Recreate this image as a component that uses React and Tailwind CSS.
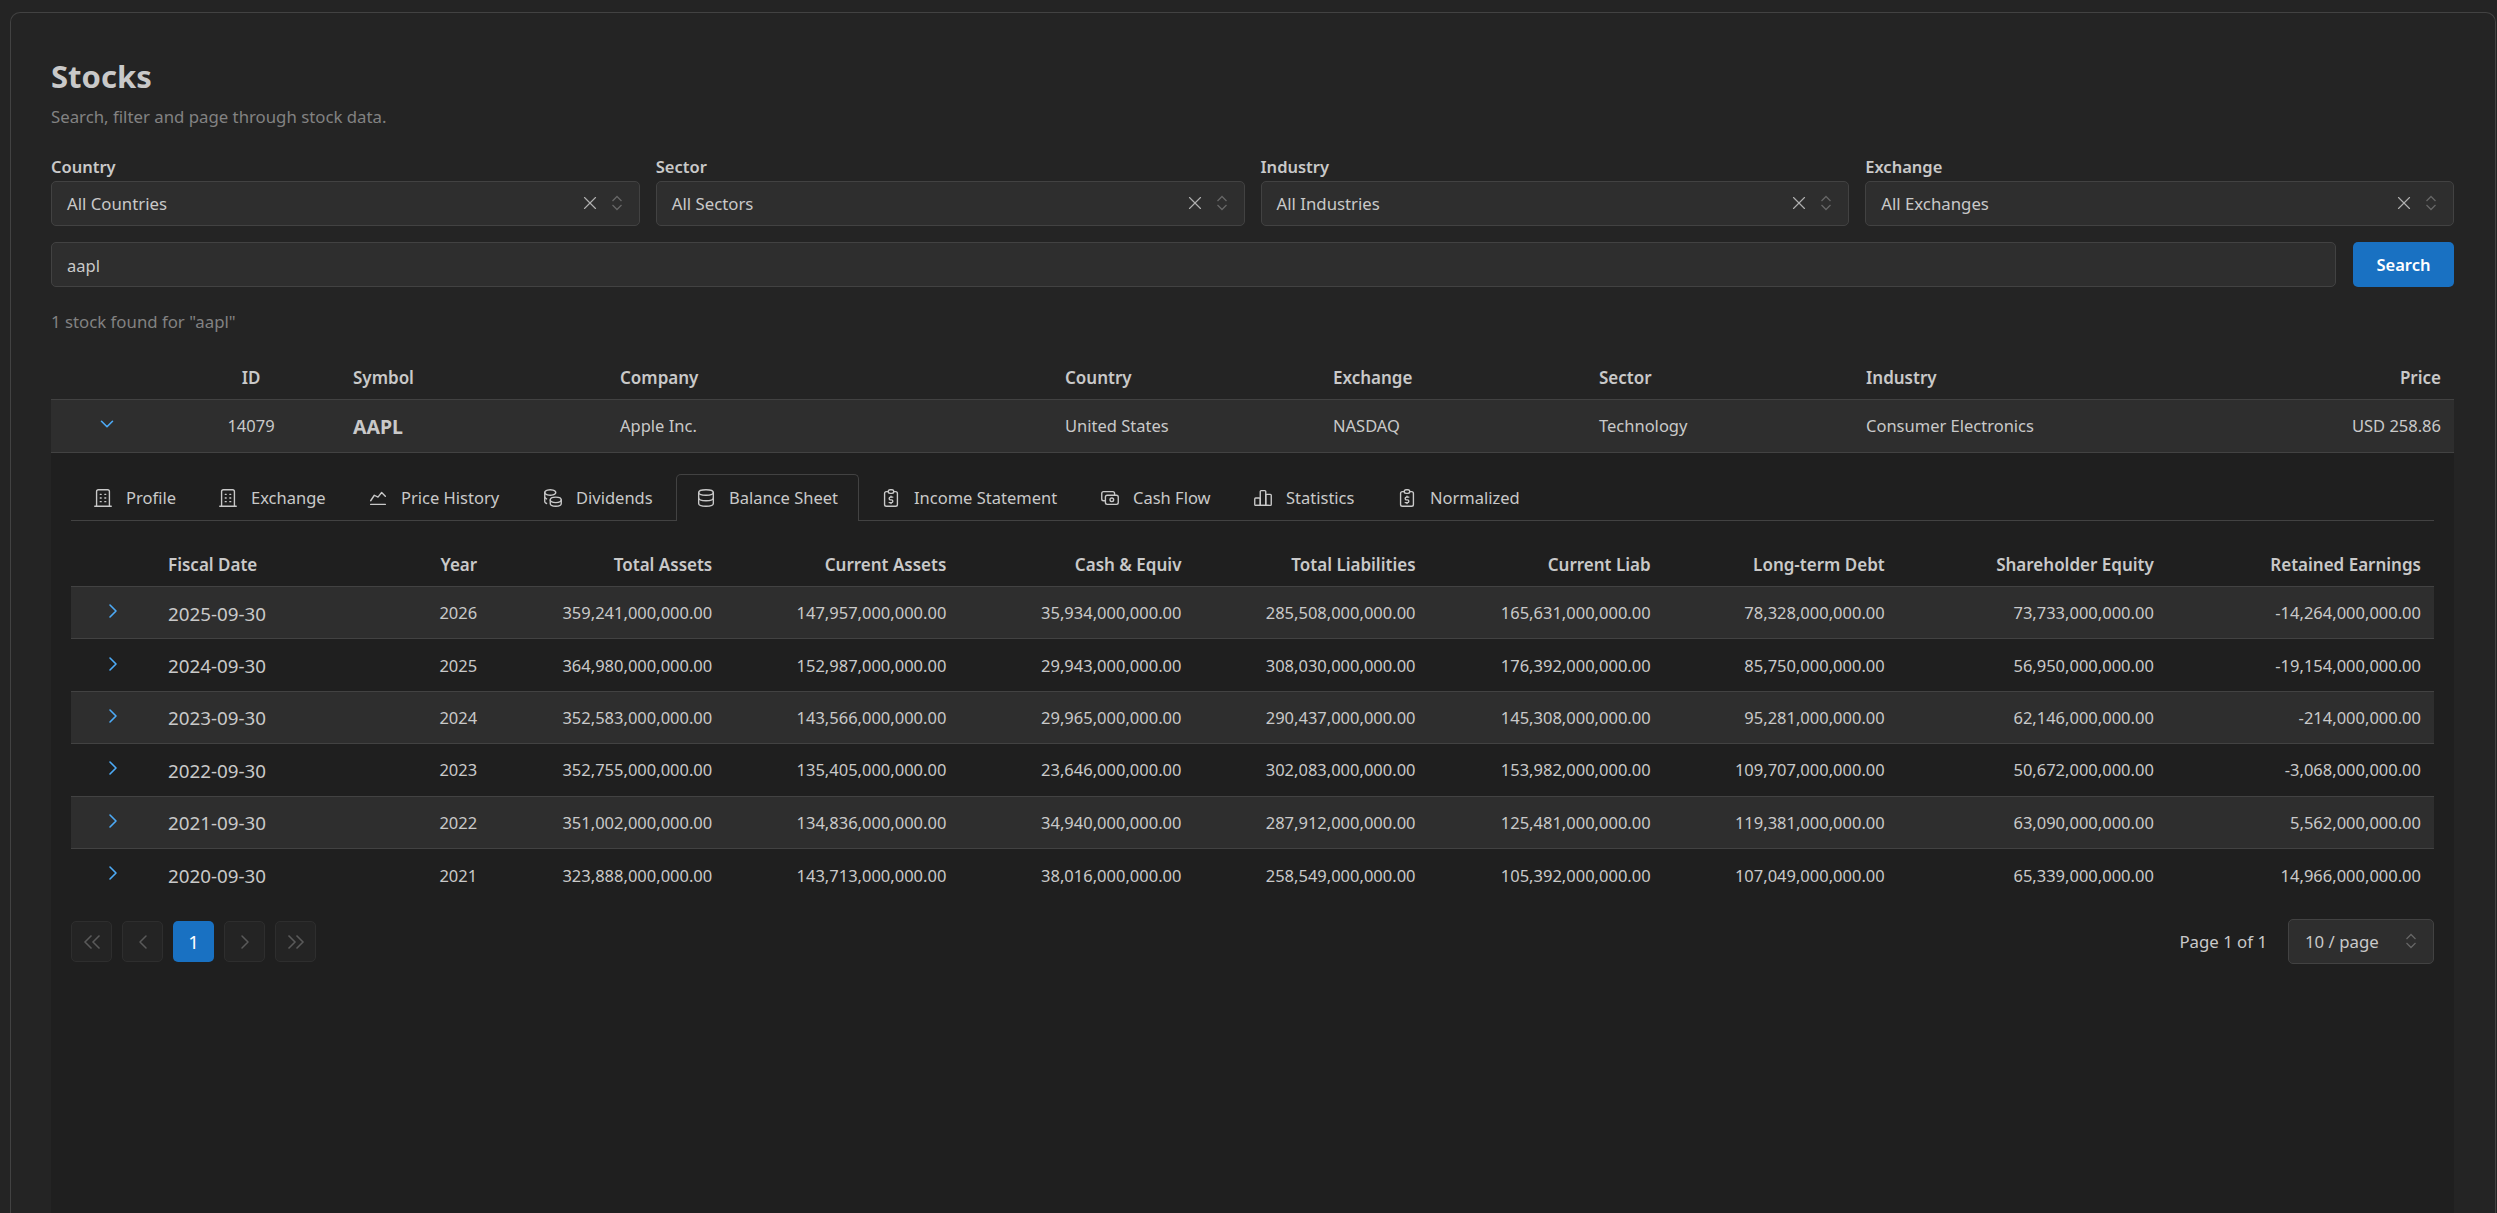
import { TbBuilding, TbChartLine, TbCoins, TbDatabase, TbReportMoney, TbCash, TbChartBar, TbChevronDown, TbChevronRight, TbChevronLeft, TbX } from "react-icons/tb";

const tabs = [
    { name: "Profile", icon: TbBuilding, w: "w-[125px]" },
    { name: "Exchange", icon: TbBuilding, w: "w-[150px]" },
    { name: "Price History", icon: TbChartLine, w: "w-[175px]" },
    { name: "Dividends", icon: TbCoins, w: "w-[155px]" },
    { name: "Balance Sheet", icon: TbDatabase, w: "w-[183px]", active: true },
    { name: "Income Statement", icon: TbReportMoney, w: "w-[219px]" },
    { name: "Cash Flow", icon: TbCash, w: "w-[153px]" },
    { name: "Statistics", icon: TbChartBar, w: "w-[144px]" },
    { name: "Normalized", icon: TbReportMoney, w: "w-[166px]" },
];

const rows = [
    ["2025-09-30", "2026", "359,241,000,000.00", "147,957,000,000.00", "35,934,000,000.00", "285,508,000,000.00", "165,631,000,000.00", "78,328,000,000.00", "73,733,000,000.00", "-14,264,000,000.00"],
    ["2024-09-30", "2025", "364,980,000,000.00", "152,987,000,000.00", "29,943,000,000.00", "308,030,000,000.00", "176,392,000,000.00", "85,750,000,000.00", "56,950,000,000.00", "-19,154,000,000.00"],
    ["2023-09-30", "2024", "352,583,000,000.00", "143,566,000,000.00", "29,965,000,000.00", "290,437,000,000.00", "145,308,000,000.00", "95,281,000,000.00", "62,146,000,000.00", "-214,000,000.00"],
    ["2022-09-30", "2023", "352,755,000,000.00", "135,405,000,000.00", "23,646,000,000.00", "302,083,000,000.00", "153,982,000,000.00", "109,707,000,000.00", "50,672,000,000.00", "-3,068,000,000.00"],
    ["2021-09-30", "2022", "351,002,000,000.00", "134,836,000,000.00", "34,940,000,000.00", "287,912,000,000.00", "125,481,000,000.00", "119,381,000,000.00", "63,090,000,000.00", "5,562,000,000.00"],
    ["2020-09-30", "2021", "323,888,000,000.00", "143,713,000,000.00", "38,016,000,000.00", "258,549,000,000.00", "105,392,000,000.00", "107,049,000,000.00", "65,339,000,000.00", "14,966,000,000.00"],
];

const heads = ["Total Assets", "Current Assets", "Cash & Equiv", "Total Liabilities", "Current Liab", "Long-term Debt", "Shareholder Equity", "Retained Earnings"];
const widths = ["w-[235px]", "w-[234px]", "w-[235px]", "w-[234px]", "w-[235px]", "w-[234px]", "w-[269px]", "w-[267px]"];

const Selector = () => (
    <svg className="w-[12px] h-[16px] shrink-0 text-[#666666]" viewBox="0 0 12 16" fill="none" stroke="currentColor" strokeWidth="1.3">
        <path d="M1.5 6L6 1.5L10.5 6" />
        <path d="M1.5 10L6 14.5L10.5 10" />
    </svg>
);

const Filter = ({ label, value }) => (
    <div>
        <div className="h-[28px] leading-[28px] font-semibold text-[#c9c9c9]">{label}</div>
        <div className="h-[45px] flex items-center pl-[15px] pr-[16px] rounded-[5px] bg-[#2e2e2e] border border-[#424242] text-[#c9c9c9]">
            <span className="flex-1 text-[16.8px] pt-[1px]">{value}</span>
            <TbX className="w-[22px] h-[22px] -mt-[2px] text-[#b0b0b0]" strokeWidth={1.25} />
            <div className="ml-[10px] -mt-[2px]"><Selector /></div>
        </div>
    </div>
);

const PageButton = ({ children }) => (
    <button className="w-[41px] h-[41px] flex items-center justify-center rounded-[5px] bg-[#242424] border border-[#2e2e2e] text-[#5a5a5a]">{children}</button>
);

const DoubleLeft = () => (
    <svg className="w-[18px] h-[16px]" viewBox="0 0 18 16" fill="none" stroke="currentColor" strokeWidth="1.5">
        <path d="M8.5 1.5L2 8L8.5 14.5" />
        <path d="M16.5 1.5L10 8L16.5 14.5" />
    </svg>
);

const DoubleRight = () => (
    <svg className="w-[18px] h-[16px]" viewBox="0 0 18 16" fill="none" stroke="currentColor" strokeWidth="1.5">
        <path d="M1.5 1.5L8 8L1.5 14.5" />
        <path d="M9.5 1.5L16 8L9.5 14.5" />
    </svg>
);

const App = () => {
    return (
        <div className="h-[1213px] overflow-hidden bg-[#242424] pt-3 pl-[10px] pr-[1px] text-[16.5px] text-[#c9c9c9] font-['Noto_Sans',sans-serif]">
            <div className="h-full pt-[39px] pl-[40px] pr-[41px] rounded-t-[10px] border-l border-r border-t border-[#424242]">
                <h2 className="h-[48px] text-[31px] leading-[48px] font-bold">Stocks</h2>
                <p className="mt-[5px] h-[24px] leading-[24px] text-[16.8px] text-[#828282]">Search, filter and page through stock data.</p>
                <div className="mt-[24px] grid grid-cols-4 gap-x-4">
                    <Filter label="Country" value="All Countries" />
                    <Filter label="Sector" value="All Sectors" />
                    <Filter label="Industry" value="All Industries" />
                    <Filter label="Exchange" value="All Exchanges" />
                </div>
                <div className="mt-4 flex gap-[17px]">
                    <div className="flex-1 h-[45px] flex items-center pt-[3px] px-[15px] rounded-[5px] bg-[#2e2e2e] border border-[#424242]">aapl</div>
                    <button className="w-[101px] h-[45px] pt-[2px] rounded-[5px] bg-[#1971c2] text-white font-semibold">Search</button>
                </div>
                <p className="mt-[23px] h-[24px] leading-[24px] text-[16.8px] text-[#828282]">1 stock found for "aapl"</p>

                <table className="mt-[21px] w-full table-fixed border-collapse">
                    <thead>
                        <tr className="h-[44px] border-b border-[#424242] text-[17px] [&>th]:pt-[2px]">
                            <th className="w-[111px]"></th>
                            <th className="w-[178px] font-semibold text-center">ID</th>
                            <th className="w-[267px] font-semibold text-left pl-[13px]">Symbol</th>
                            <th className="w-[445px] font-semibold text-left pl-[13px]">Company</th>
                            <th className="w-[268px] font-semibold text-left pl-[13px]">Country</th>
                            <th className="w-[266px] font-semibold text-left pl-[13px]">Exchange</th>
                            <th className="w-[267px] font-semibold text-left pl-[13px]">Sector</th>
                            <th className="w-[267px] font-semibold text-left pl-[13px]">Industry</th>
                            <th className="font-semibold text-right pr-[13px]">Price</th>
                        </tr>
                    </thead>
                    <tbody>
                        <tr className="h-[53px] bg-[#2e2e2e] border-b border-[#424242] [&>td]:pt-[2px]">
                            <td><TbChevronDown className="mx-auto -mt-[5px] w-[22px] h-[22px] text-[#4dabf7]" strokeWidth={1.75} /></td>
                            <td className="text-center">14079</td>
                            <td className="pl-[13px] text-[19.5px] font-bold">AAPL</td>
                            <td className="pl-[13px]">Apple Inc.</td>
                            <td className="pl-[13px]">United States</td>
                            <td className="pl-[13px]">NASDAQ</td>
                            <td className="pl-[13px]">Technology</td>
                            <td className="pl-[13px]">Consumer Electronics</td>
                            <td className="pr-[13px] text-right">USD 258.86</td>
                        </tr>
                    </tbody>
                </table>

                <div className="h-[800px] bg-[#1f1f1f] px-[20px] pt-[21px]">
                    <div className="flex h-[47px] border-b border-[#424242]">
                        {tabs.map(tab => {
                            const Icon = tab.icon
                            return (
                                <div key={tab.name} className={`${tab.w} h-[47px] flex items-center gap-3 rounded-t-[5px] border border-b-0 ${tab.active ? "pl-[18px] border-[#424242] bg-[#1f1f1f]" : "pl-[20px] border-transparent"}`}>
                                    <Icon className="w-[22px] h-[22px] shrink-0 text-[#c9c9c9]" strokeWidth={1.5} />
                                    <span className="pt-[1px]">{tab.name}</span>
                                </div>
                            )
                        })}
                    </div>

                    <table className="mt-[19px] w-full table-fixed border-collapse">
                        <thead>
                            <tr className="h-[47px] border-b border-[#424242] text-[17px] [&>th]:pt-[3px]">
                                <th className="w-[84px]"></th>
                                <th className="w-[215px] font-semibold text-left pl-[13px]">Fiscal Date</th>
                                <th className="w-[120px] font-semibold text-right pr-[13px]">Year</th>
                                {heads.map((h, i) => <th key={h} className={`${widths[i]} font-semibold text-right pr-[13px]`}>{h}</th>)}
                            </tr>
                        </thead>
                        <tbody>
                            {rows.map((row, index) =>
                                <tr key={row[0]} className={`h-[52.4px] [&>td]:pt-[2px] ${index % 2 === 0 ? "bg-[#2e2e2e]" : ""} ${index < 5 ? "border-b border-[#424242]" : ""}`}>
                                    <td><TbChevronRight className="mx-auto -mt-[5px] w-[24px] h-[24px] text-[#4dabf7]" strokeWidth={1.6} /></td>
                                    <td className="pl-[13px] text-[18.8px]">{row[0]}</td>
                                    {row.slice(1).map((v, i) => <td key={i} className="pr-[13px] text-right">{v}</td>)}
                                </tr>
                            )}
                        </tbody>
                    </table>

                    <div className="mt-[18px] flex items-center justify-between">
                        <div className="flex gap-[10px] mt-[1px]">
                            <PageButton><DoubleLeft /></PageButton>
                            <PageButton><TbChevronLeft className="w-[24px] h-[24px]" strokeWidth={1.5} /></PageButton>
                            <button className="w-[41px] h-[41px] rounded-[5px] bg-[#1971c2] text-white text-[18.8px]">1</button>
                            <PageButton><TbChevronRight className="w-[24px] h-[24px]" strokeWidth={1.5} /></PageButton>
                            <PageButton><DoubleRight /></PageButton>
                        </div>
                        <div className="flex items-center gap-[21px]">
                            <span className="text-[16.8px] pt-[1px]">Page 1 of 1</span>
                            <div className="w-[146px] h-[45px] flex items-center justify-between pl-[16px] pr-[16px] rounded-[5px] bg-[#2e2e2e] border border-[#424242]">
                                <span className="text-[16.8px] pt-[1px]">10 / page</span>
                                <Selector />
                            </div>
                        </div>
                    </div>
                </div>
            </div>
        </div>
    );
};

export default App;
